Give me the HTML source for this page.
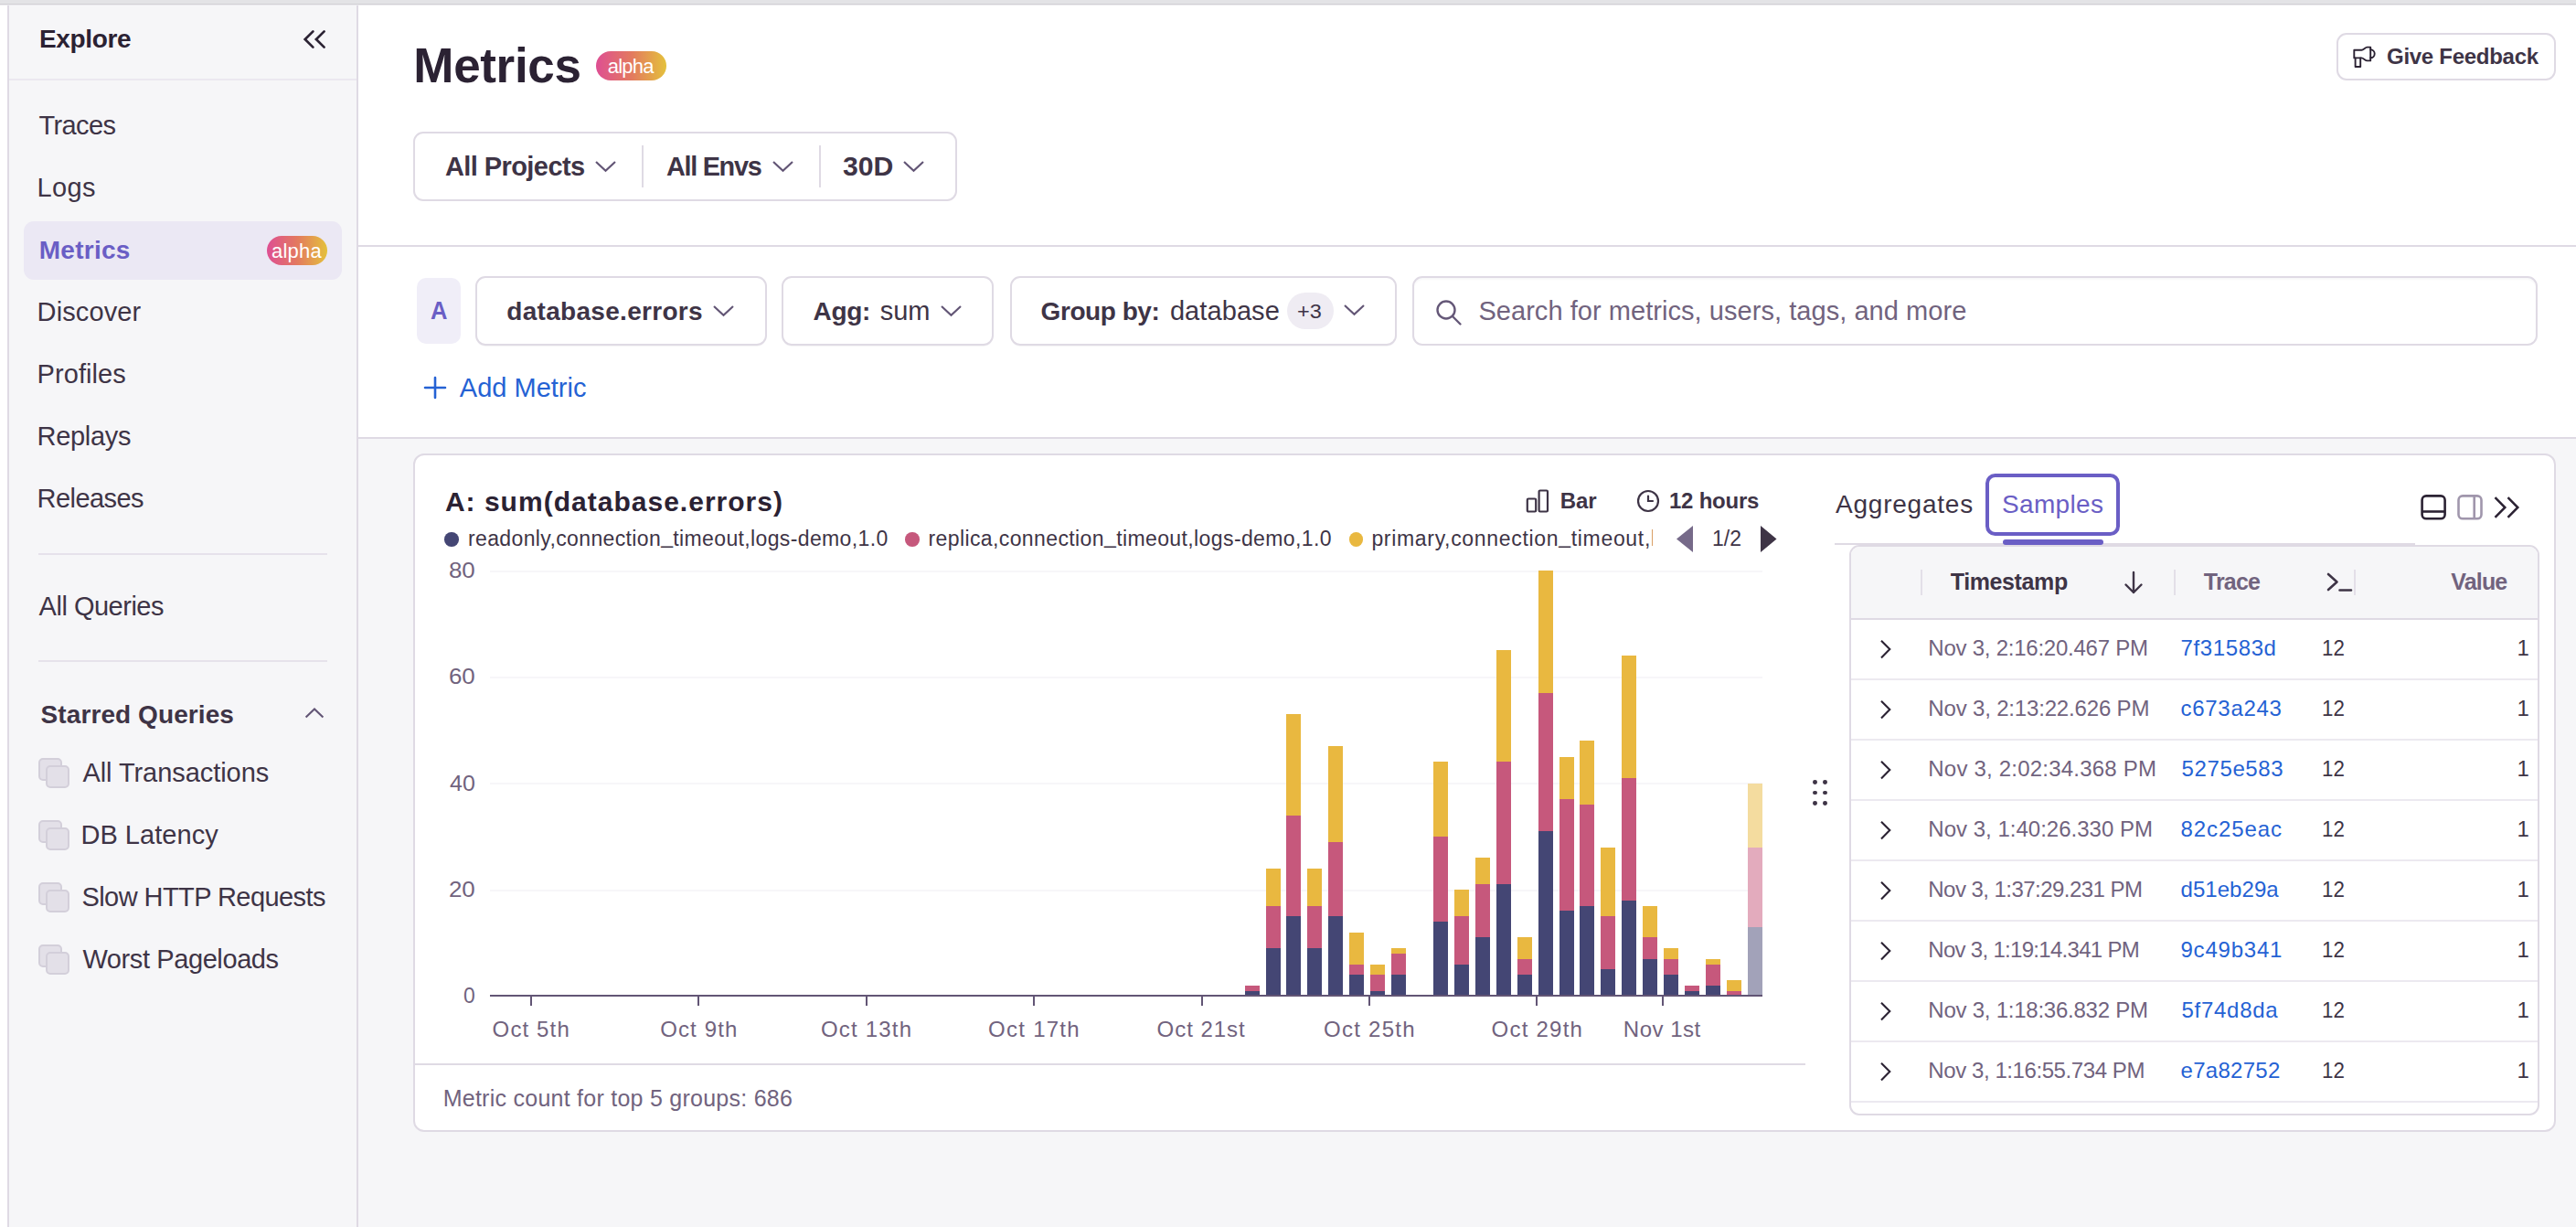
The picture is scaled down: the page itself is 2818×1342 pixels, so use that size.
<!DOCTYPE html>
<html><head><meta charset="utf-8"><title>Metrics</title>
<style>
html,body{margin:0;padding:0;}
body{width:2818px;height:1342px;position:relative;overflow:hidden;background:#fff;font-family:"Liberation Sans", sans-serif;}
.t{position:absolute;white-space:nowrap;}
</style></head><body>
<div style="position:absolute;left:0.00px;top:0.00px;width:2818.00px;height:4.00px;background:#e3e3e6"></div>
<div style="position:absolute;left:0.00px;top:4.00px;width:2818.00px;height:1.00px;background:#d2d0d5"></div>
<div style="position:absolute;left:0.00px;top:5.00px;width:2818.00px;height:1.00px;background:#ebeaee"></div>
<div style="position:absolute;left:8.00px;top:6.00px;width:384.00px;height:1336.00px;background:#f6f6f8"></div>
<div style="position:absolute;left:8.00px;top:6.00px;width:2.00px;height:1336.00px;background:#dfdae4"></div>
<div style="position:absolute;left:390.00px;top:6.00px;width:2.00px;height:1336.00px;background:#dfdae4"></div>
<div style="position:absolute;left:10.00px;top:86.00px;width:380.00px;height:2.00px;background:#ebe8f0"></div>
<div class="t" style="left:43.00px;top:29.00px;font-size:28px;line-height:28px;font-weight:700;color:#2b2233;letter-spacing:-0.355px;">Explore</div>
<svg style="position:absolute;left:330.00px;top:31.00px;overflow:visible" width="28.00" height="24.00" viewBox="0 0 28.00 24.00"><path d="M12.4 3.4 L3.7 12 L12.4 20.6 M24.6 3.4 L15.9 12 L24.6 20.6" fill="none" stroke="#2b2233" stroke-width="2.7" stroke-linecap="round" stroke-linejoin="miter"/></svg>
<div style="position:absolute;left:26.00px;top:242.00px;width:348.00px;height:64.00px;background:#ebe8f4;border-radius:11px"></div>
<div class="t" style="left:42.60px;top:123.00px;font-size:29px;line-height:29px;font-weight:400;color:#3e3446;letter-spacing:-0.650px;">Traces</div>
<div class="t" style="left:40.60px;top:191.00px;font-size:29px;line-height:29px;font-weight:400;color:#3e3446;letter-spacing:0.305px;">Logs</div>
<div class="t" style="left:42.75px;top:260.00px;font-size:28px;line-height:28px;font-weight:700;color:#6a5ec5;letter-spacing:0.264px;">Metrics</div>
<div class="t" style="left:40.60px;top:327.00px;font-size:29px;line-height:29px;font-weight:400;color:#3e3446;letter-spacing:0.108px;">Discover</div>
<div class="t" style="left:40.60px;top:395.00px;font-size:29px;line-height:29px;font-weight:400;color:#3e3446;letter-spacing:0.071px;">Profiles</div>
<div class="t" style="left:40.60px;top:463.00px;font-size:29px;line-height:29px;font-weight:400;color:#3e3446;letter-spacing:-0.328px;">Replays</div>
<div class="t" style="left:40.60px;top:531.00px;font-size:29px;line-height:29px;font-weight:400;color:#3e3446;letter-spacing:-0.571px;">Releases</div>
<div style="position:absolute;left:292px;top:258px;width:66px;height:32px;border-radius:16.0px;background:linear-gradient(90deg,#de4f93 0%,#e3795f 50%,#e4c13c 100%)"></div>
<div class="t" style="left:297.00px;top:264.00px;font-size:22px;line-height:22px;font-weight:400;color:#fff;letter-spacing:0.227px;">alpha</div>
<div style="position:absolute;left:42.00px;top:605.00px;width:316.00px;height:2.00px;background:#e6e2eb"></div>
<div class="t" style="left:42.60px;top:649.00px;font-size:29px;line-height:29px;font-weight:400;color:#3e3446;letter-spacing:-0.493px;">All Queries</div>
<div style="position:absolute;left:42.00px;top:722.00px;width:316.00px;height:2.00px;background:#e6e2eb"></div>
<div class="t" style="left:44.60px;top:768.00px;font-size:28px;line-height:28px;font-weight:700;color:#3e3446;letter-spacing:0.084px;">Starred Queries</div>
<svg style="position:absolute;left:332.00px;top:772.00px;overflow:visible" width="25.00" height="16.00" viewBox="0 0 25.00 16.00"><path d="M2.6 12.4 L12 3.4 L21.4 12.4" fill="none" stroke="#625575" stroke-width="2.1" stroke-linecap="butt" stroke-linejoin="miter"/></svg>
<div style="position:absolute;left:42.00px;top:828.50px;width:26.00px;height:25.00px;background:#e3e0e8;border:2px solid #d3cfda;border-radius:5px;box-sizing:border-box"></div>
<div style="position:absolute;left:50.00px;top:837.00px;width:26.00px;height:24.50px;background:#e3e0e8;border:2px solid #d3cfda;border-radius:5px;box-sizing:border-box"></div>
<div class="t" style="left:90.40px;top:831.00px;font-size:29px;line-height:29px;font-weight:400;color:#3e3446;letter-spacing:-0.055px;">All Transactions</div>
<div style="position:absolute;left:42.00px;top:896.50px;width:26.00px;height:25.00px;background:#e3e0e8;border:2px solid #d3cfda;border-radius:5px;box-sizing:border-box"></div>
<div style="position:absolute;left:50.00px;top:905.00px;width:26.00px;height:24.50px;background:#e3e0e8;border:2px solid #d3cfda;border-radius:5px;box-sizing:border-box"></div>
<div class="t" style="left:88.40px;top:899.00px;font-size:29px;line-height:29px;font-weight:400;color:#3e3446;letter-spacing:0.043px;">DB Latency</div>
<div style="position:absolute;left:42.00px;top:964.50px;width:26.00px;height:25.00px;background:#e3e0e8;border:2px solid #d3cfda;border-radius:5px;box-sizing:border-box"></div>
<div style="position:absolute;left:50.00px;top:973.00px;width:26.00px;height:24.50px;background:#e3e0e8;border:2px solid #d3cfda;border-radius:5px;box-sizing:border-box"></div>
<div class="t" style="left:89.40px;top:967.00px;font-size:29px;line-height:29px;font-weight:400;color:#3e3446;letter-spacing:-0.559px;">Slow HTTP Requests</div>
<div style="position:absolute;left:42.00px;top:1032.50px;width:26.00px;height:25.00px;background:#e3e0e8;border:2px solid #d3cfda;border-radius:5px;box-sizing:border-box"></div>
<div style="position:absolute;left:50.00px;top:1041.00px;width:26.00px;height:24.50px;background:#e3e0e8;border:2px solid #d3cfda;border-radius:5px;box-sizing:border-box"></div>
<div class="t" style="left:90.40px;top:1035.00px;font-size:29px;line-height:29px;font-weight:400;color:#3e3446;letter-spacing:-0.400px;">Worst Pageloads</div>
<div class="t" style="left:452.30px;top:45.00px;font-size:53px;line-height:53px;font-weight:700;color:#2b2233;letter-spacing:-0.317px;">Metrics</div>
<div style="position:absolute;left:652px;top:56px;width:77px;height:32px;border-radius:16.0px;background:linear-gradient(90deg,#de4f93 0%,#e3795f 50%,#e4c13c 100%)"></div>
<div class="t" style="left:664.70px;top:62.00px;font-size:22px;line-height:22px;font-weight:400;color:#fff;letter-spacing:-0.773px;">alpha</div>
<div style="position:absolute;left:452.00px;top:144.00px;width:595.00px;height:76.00px;border:2px solid #dfdae4;border-radius:11px;box-sizing:border-box"></div>
<div style="position:absolute;left:702.00px;top:159.00px;width:2.00px;height:46.00px;background:#dfdae4"></div>
<div style="position:absolute;left:896.00px;top:159.00px;width:2.00px;height:46.00px;background:#dfdae4"></div>
<div class="t" style="left:487.00px;top:168.00px;font-size:29px;line-height:29px;font-weight:700;color:#3e3446;letter-spacing:-0.584px;">All Projects</div>
<svg style="position:absolute;left:648.50px;top:173.60px;overflow:visible" width="27.00" height="15.70" viewBox="0 0 27.00 15.70"><path d="M3 3 L13.50 12.70 L24.00 3" fill="none" stroke="#625575" stroke-width="2.2" stroke-linecap="butt" stroke-linejoin="miter"/></svg>
<div class="t" style="left:729.00px;top:168.00px;font-size:29px;line-height:29px;font-weight:700;color:#3e3446;letter-spacing:-1.300px;transform:scaleX(0.9942);transform-origin:-0.00px 0;">All Envs</div>
<svg style="position:absolute;left:842.50px;top:173.60px;overflow:visible" width="27.00" height="15.70" viewBox="0 0 27.00 15.70"><path d="M3 3 L13.50 12.70 L24.00 3" fill="none" stroke="#625575" stroke-width="2.2" stroke-linecap="butt" stroke-linejoin="miter"/></svg>
<div class="t" style="left:922.00px;top:168.00px;font-size:29px;line-height:29px;font-weight:700;color:#3e3446;transform:scaleX(1.0410);transform-origin:-0.00px 0;">30D</div>
<svg style="position:absolute;left:986.00px;top:173.60px;overflow:visible" width="27.00" height="15.70" viewBox="0 0 27.00 15.70"><path d="M3 3 L13.50 12.70 L24.00 3" fill="none" stroke="#625575" stroke-width="2.2" stroke-linecap="butt" stroke-linejoin="miter"/></svg>
<div style="position:absolute;left:392.00px;top:268.00px;width:2426.00px;height:2.00px;background:#dfdae4"></div>
<div style="position:absolute;left:2556.00px;top:36.00px;width:240.00px;height:52.00px;border:2px solid #dfdae4;border-radius:11px;box-sizing:border-box"></div>
<svg style="position:absolute;left:2566.00px;top:44.00px;overflow:visible" width="40.00" height="36.00" viewBox="0 0 40.00 36.00"><g fill="none" stroke="#2b2233" stroke-width="1.9" stroke-linejoin="round" stroke-linecap="round"><path d="M9.3 10.8 H17.5 C19.5 10.8 21.5 7.6 23.5 7.6 H27.2 V22.4 H23.5 C21.5 22.4 19.5 19.4 17.5 19.4 H9.3 Z"/><path d="M27.2 10.3 A4.5 4.5 0 0 1 27.2 19.3"/><path d="M10.6 19.4 V29 H16.2 V19.4"/></g></svg>
<div class="t" style="left:2611.00px;top:50.00px;font-size:24px;line-height:24px;font-weight:700;color:#3e3446;letter-spacing:-0.281px;">Give Feedback</div>
<div style="position:absolute;left:456.00px;top:304.00px;width:48.00px;height:72.00px;background:#f0eef8;border-radius:10px"></div>
<div class="t" style="left:470.70px;top:327.00px;font-size:27px;line-height:27px;font-weight:700;color:#6a5ec5;transform:scaleX(0.9474);transform-origin:-0.00px 0;">A</div>
<div style="position:absolute;left:520.00px;top:302.00px;width:319.00px;height:76.00px;border:2px solid #dfdae4;border-radius:11px;box-sizing:border-box;box-shadow:0 2px 1px -1px rgba(43,34,51,0.05)"></div>
<div class="t" style="left:554.30px;top:327.00px;font-size:28px;line-height:28px;font-weight:700;color:#3e3446;letter-spacing:0.297px;">database.errors</div>
<svg style="position:absolute;left:777.50px;top:331.60px;overflow:visible" width="27.00" height="15.70" viewBox="0 0 27.00 15.70"><path d="M3 3 L13.50 12.70 L24.00 3" fill="none" stroke="#625575" stroke-width="2.2" stroke-linecap="butt" stroke-linejoin="miter"/></svg>
<div style="position:absolute;left:855.00px;top:302.00px;width:232.00px;height:76.00px;border:2px solid #dfdae4;border-radius:11px;box-sizing:border-box;box-shadow:0 2px 1px -1px rgba(43,34,51,0.05)"></div>
<div class="t" style="left:889.60px;top:327.00px;font-size:28px;line-height:28px;font-weight:700;color:#3e3446;letter-spacing:-0.376px;">Agg:</div>
<div class="t" style="left:962.70px;top:326.00px;font-size:29px;line-height:29px;font-weight:400;color:#3e3446;">sum</div>
<svg style="position:absolute;left:1026.50px;top:331.60px;overflow:visible" width="27.00" height="15.70" viewBox="0 0 27.00 15.70"><path d="M3 3 L13.50 12.70 L24.00 3" fill="none" stroke="#625575" stroke-width="2.2" stroke-linecap="butt" stroke-linejoin="miter"/></svg>
<div style="position:absolute;left:1105.00px;top:302.00px;width:423.00px;height:76.00px;border:2px solid #dfdae4;border-radius:11px;box-sizing:border-box;box-shadow:0 2px 1px -1px rgba(43,34,51,0.05)"></div>
<div class="t" style="left:1138.60px;top:327.00px;font-size:28px;line-height:28px;font-weight:700;color:#3e3446;letter-spacing:-0.443px;">Group by:</div>
<div class="t" style="left:1279.90px;top:326.00px;font-size:29px;line-height:29px;font-weight:400;color:#3e3446;letter-spacing:0.086px;">database</div>
<div style="position:absolute;left:1408.00px;top:320.00px;width:51.00px;height:40.00px;background:#efecf3;border-radius:20px"></div>
<div class="t" style="left:1419.40px;top:330.00px;font-size:22px;line-height:22px;font-weight:400;color:#3e3446;transform:scaleX(1.0693);transform-origin:1.00px 0;">+3</div>
<svg style="position:absolute;left:1467.80px;top:331.20px;overflow:visible" width="27.00" height="15.70" viewBox="0 0 27.00 15.70"><path d="M3 3 L13.50 12.70 L24.00 3" fill="none" stroke="#625575" stroke-width="2.2" stroke-linecap="butt" stroke-linejoin="miter"/></svg>
<div style="position:absolute;left:1545.00px;top:302.00px;width:1231.00px;height:76.00px;border:2px solid #dfdae4;border-radius:11px;box-sizing:border-box;box-shadow:inset 0 2px 2px rgba(43,34,51,0.03)"></div>
<svg style="position:absolute;left:1570.00px;top:327.00px;overflow:visible" width="30.00" height="30.00" viewBox="0 0 30.00 30.00"><g fill="none" stroke="#655878" stroke-width="2.4" stroke-linecap="round"><circle cx="12" cy="12" r="9.5"/><path d="M19 19 L27.5 27.5"/></g></svg>
<div class="t" style="left:1617.40px;top:326.00px;font-size:29px;line-height:29px;font-weight:400;color:#71637e;letter-spacing:0.051px;">Search for metrics, users, tags, and more</div>
<svg style="position:absolute;left:463.00px;top:411.00px;overflow:visible" width="26.00" height="26.00" viewBox="0 0 26.00 26.00"><path d="M13 2 V24 M2 13 H24" fill="none" stroke="#2562d4" stroke-width="2.6" stroke-linecap="round"/></svg>
<div class="t" style="left:502.80px;top:410.00px;font-size:29px;line-height:29px;font-weight:400;color:#2562d4;letter-spacing:0.011px;">Add Metric</div>
<div style="position:absolute;left:392.00px;top:478.00px;width:2426.00px;height:2.00px;background:#dfdae4"></div>
<div style="position:absolute;left:392.00px;top:480.00px;width:2426.00px;height:862.00px;background:#f6f6f8"></div>
<div style="position:absolute;left:452.00px;top:496.00px;width:2344.00px;height:742.00px;background:#fff;border:2px solid #dfdae4;border-radius:12px;box-sizing:border-box"></div>
<div class="t" style="left:486.90px;top:534.00px;font-size:30px;line-height:30px;font-weight:700;color:#2b2233;letter-spacing:1.014px;">A: sum(database.errors)</div>
<div style="position:absolute;left:486px;top:582px;width:15.5px;height:15.5px;border-radius:50%;background:#444674"></div>
<div style="position:absolute;left:990.3px;top:582px;width:15.5px;height:15.5px;border-radius:50%;background:#c6587c"></div>
<div style="position:absolute;left:1475.5px;top:582px;width:15.5px;height:15.5px;border-radius:50%;background:#e9b840"></div>
<div class="t" style="left:512.00px;top:578.00px;font-size:23px;line-height:23px;font-weight:400;color:#3e3446;letter-spacing:0.367px;">readonly,connection<span style="position:relative;top:-3px">_</span>timeout,logs-demo,1.0</div>
<div class="t" style="left:1015.50px;top:578.00px;font-size:23px;line-height:23px;font-weight:400;color:#3e3446;letter-spacing:0.393px;">replica,connection<span style="position:relative;top:-3px">_</span>timeout,logs-demo,1.0</div>
<div style="position:absolute;left:1501.4px;top:568.00px;width:307.10px;height:43px;overflow:hidden"><div class="t" style="left:-1.00px;top:10px;font-size:23px;line-height:23px;font-weight:400;color:#3e3446;letter-spacing:0.680px;">primary,connection<span style="position:relative;top:-3px">_</span>timeout,logs-demo,1.0</div></div>
<svg style="position:absolute;left:1833.50px;top:574.50px;overflow:visible" width="18.00" height="29.00" viewBox="0 0 18.00 29.00"><path d="M18 0 V29 L0 14.5 Z" fill="#766a89"/></svg>
<div class="t" style="left:1873.00px;top:578.00px;font-size:23px;line-height:23px;font-weight:400;color:#3e3446;">1/2</div>
<svg style="position:absolute;left:1926.00px;top:574.50px;overflow:visible" width="17.50" height="29.00" viewBox="0 0 17.50 29.00"><path d="M0 0 V29 L17.5 14.5 Z" fill="#3e3446"/></svg>
<svg style="position:absolute;left:1669.00px;top:535.00px;overflow:visible" width="26.00" height="26.00" viewBox="0 0 26.00 26.00"><g fill="none" stroke="#3e3446" stroke-width="2.2" stroke-linejoin="round"><rect x="1.8" y="10.5" width="9.4" height="14" rx="1.2"/><rect x="14.6" y="1.5" width="9.4" height="23" rx="1.2"/></g></svg>
<div class="t" style="left:1706.70px;top:536.00px;font-size:24px;line-height:24px;font-weight:700;color:#3e3446;">Bar</div>
<svg style="position:absolute;left:1790.00px;top:535.00px;overflow:visible" width="26.00" height="26.00" viewBox="0 0 26.00 26.00"><g fill="none" stroke="#3e3446" stroke-width="2.2" stroke-linecap="round"><circle cx="13" cy="13" r="11"/><path d="M13 7.5 V13 H18"/></g></svg>
<div class="t" style="left:1826.00px;top:536.00px;font-size:24px;line-height:24px;font-weight:700;color:#3e3446;letter-spacing:-0.226px;">12 hours</div>
<div style="position:absolute;left:536.00px;top:972.62px;width:1392.00px;height:2.00px;background:#f7f6f9"></div>
<div style="position:absolute;left:536.00px;top:856.25px;width:1392.00px;height:2.00px;background:#f7f6f9"></div>
<div style="position:absolute;left:536.00px;top:739.88px;width:1392.00px;height:2.00px;background:#f7f6f9"></div>
<div style="position:absolute;left:536.00px;top:623.50px;width:1392.00px;height:2.00px;background:#f7f6f9"></div>
<div class="t" style="left:506.90px;top:1077.00px;font-size:24px;line-height:24px;font-weight:400;color:#71637e;transform:scaleX(0.9538);transform-origin:-0.00px 0;">0</div>
<div class="t" style="left:490.90px;top:961.00px;font-size:24px;line-height:24px;font-weight:400;color:#71637e;transform:scaleX(1.0810);transform-origin:1.00px 0;">20</div>
<div class="t" style="left:491.90px;top:845.00px;font-size:24px;line-height:24px;font-weight:400;color:#71637e;transform:scaleX(1.0399);transform-origin:-0.00px 0;">40</div>
<div class="t" style="left:490.90px;top:728.00px;font-size:24px;line-height:24px;font-weight:400;color:#71637e;transform:scaleX(1.0810);transform-origin:1.00px 0;">60</div>
<div class="t" style="left:490.90px;top:612.00px;font-size:24px;line-height:24px;font-weight:400;color:#71637e;transform:scaleX(1.0810);transform-origin:1.00px 0;">80</div>
<div style="position:absolute;left:579.78px;top:1089.00px;width:2.00px;height:11.00px;background:#625575"></div>
<div class="t" style="left:538.60px;top:1114.00px;font-size:24px;line-height:24px;font-weight:400;color:#71637e;letter-spacing:1.130px;">Oct 5th</div>
<div style="position:absolute;left:763.22px;top:1089.00px;width:2.00px;height:11.00px;background:#625575"></div>
<div class="t" style="left:722.20px;top:1114.00px;font-size:24px;line-height:24px;font-weight:400;color:#71637e;letter-spacing:1.130px;">Oct 9th</div>
<div style="position:absolute;left:946.66px;top:1089.00px;width:2.00px;height:11.00px;background:#625575"></div>
<div class="t" style="left:898.00px;top:1114.00px;font-size:24px;line-height:24px;font-weight:400;color:#71637e;letter-spacing:1.190px;">Oct 13th</div>
<div style="position:absolute;left:1130.10px;top:1089.00px;width:2.00px;height:11.00px;background:#625575"></div>
<div class="t" style="left:1081.10px;top:1114.00px;font-size:24px;line-height:24px;font-weight:400;color:#71637e;letter-spacing:1.262px;">Oct 17th</div>
<div style="position:absolute;left:1313.54px;top:1089.00px;width:2.00px;height:11.00px;background:#625575"></div>
<div class="t" style="left:1265.60px;top:1114.00px;font-size:24px;line-height:24px;font-weight:400;color:#71637e;letter-spacing:0.957px;">Oct 21st</div>
<div style="position:absolute;left:1496.98px;top:1089.00px;width:2.00px;height:11.00px;background:#625575"></div>
<div class="t" style="left:1448.00px;top:1114.00px;font-size:24px;line-height:24px;font-weight:400;color:#71637e;letter-spacing:1.262px;">Oct 25th</div>
<div style="position:absolute;left:1680.42px;top:1089.00px;width:2.00px;height:11.00px;background:#625575"></div>
<div class="t" style="left:1631.50px;top:1114.00px;font-size:24px;line-height:24px;font-weight:400;color:#71637e;letter-spacing:1.248px;">Oct 29th</div>
<div style="position:absolute;left:1818.00px;top:1089.00px;width:2.00px;height:11.00px;background:#625575"></div>
<div class="t" style="left:1775.80px;top:1114.00px;font-size:24px;line-height:24px;font-weight:400;color:#71637e;letter-spacing:0.517px;">Nov 1st</div>
<div style="position:absolute;left:1361.60px;top:1083.68px;width:16.00px;height:5.82px;background:#444674"></div>
<div style="position:absolute;left:1361.60px;top:1077.86px;width:16.00px;height:5.82px;background:#c6587c"></div>
<div style="position:absolute;left:1384.53px;top:1037.13px;width:16.00px;height:52.37px;background:#444674"></div>
<div style="position:absolute;left:1384.53px;top:990.58px;width:16.00px;height:46.55px;background:#c6587c"></div>
<div style="position:absolute;left:1384.53px;top:949.85px;width:16.00px;height:40.73px;background:#e9b840"></div>
<div style="position:absolute;left:1407.46px;top:1002.22px;width:16.00px;height:87.28px;background:#444674"></div>
<div style="position:absolute;left:1407.46px;top:891.66px;width:16.00px;height:110.56px;background:#c6587c"></div>
<div style="position:absolute;left:1407.46px;top:781.11px;width:16.00px;height:110.56px;background:#e9b840"></div>
<div style="position:absolute;left:1430.39px;top:1037.13px;width:16.00px;height:52.37px;background:#444674"></div>
<div style="position:absolute;left:1430.39px;top:990.58px;width:16.00px;height:46.55px;background:#c6587c"></div>
<div style="position:absolute;left:1430.39px;top:949.85px;width:16.00px;height:40.73px;background:#e9b840"></div>
<div style="position:absolute;left:1453.32px;top:1002.22px;width:16.00px;height:87.28px;background:#444674"></div>
<div style="position:absolute;left:1453.32px;top:920.76px;width:16.00px;height:81.46px;background:#c6587c"></div>
<div style="position:absolute;left:1453.32px;top:816.02px;width:16.00px;height:104.74px;background:#e9b840"></div>
<div style="position:absolute;left:1476.25px;top:1066.22px;width:16.00px;height:23.28px;background:#444674"></div>
<div style="position:absolute;left:1476.25px;top:1054.59px;width:16.00px;height:11.64px;background:#c6587c"></div>
<div style="position:absolute;left:1476.25px;top:1019.67px;width:16.00px;height:34.91px;background:#e9b840"></div>
<div style="position:absolute;left:1499.18px;top:1083.68px;width:16.00px;height:5.82px;background:#444674"></div>
<div style="position:absolute;left:1499.18px;top:1066.22px;width:16.00px;height:17.46px;background:#c6587c"></div>
<div style="position:absolute;left:1499.18px;top:1054.59px;width:16.00px;height:11.64px;background:#e9b840"></div>
<div style="position:absolute;left:1522.11px;top:1066.22px;width:16.00px;height:23.28px;background:#444674"></div>
<div style="position:absolute;left:1522.11px;top:1042.95px;width:16.00px;height:23.27px;background:#c6587c"></div>
<div style="position:absolute;left:1522.11px;top:1037.13px;width:16.00px;height:5.82px;background:#e9b840"></div>
<div style="position:absolute;left:1567.97px;top:1008.04px;width:16.00px;height:81.46px;background:#444674"></div>
<div style="position:absolute;left:1567.97px;top:914.94px;width:16.00px;height:93.10px;background:#c6587c"></div>
<div style="position:absolute;left:1567.97px;top:833.48px;width:16.00px;height:81.46px;background:#e9b840"></div>
<div style="position:absolute;left:1590.90px;top:1054.59px;width:16.00px;height:34.91px;background:#444674"></div>
<div style="position:absolute;left:1590.90px;top:1002.22px;width:16.00px;height:52.37px;background:#c6587c"></div>
<div style="position:absolute;left:1590.90px;top:973.12px;width:16.00px;height:29.09px;background:#e9b840"></div>
<div style="position:absolute;left:1613.83px;top:1025.49px;width:16.00px;height:64.01px;background:#444674"></div>
<div style="position:absolute;left:1613.83px;top:967.31px;width:16.00px;height:58.19px;background:#c6587c"></div>
<div style="position:absolute;left:1613.83px;top:938.21px;width:16.00px;height:29.09px;background:#e9b840"></div>
<div style="position:absolute;left:1636.76px;top:967.31px;width:16.00px;height:122.19px;background:#444674"></div>
<div style="position:absolute;left:1636.76px;top:833.48px;width:16.00px;height:133.83px;background:#c6587c"></div>
<div style="position:absolute;left:1636.76px;top:711.28px;width:16.00px;height:122.19px;background:#e9b840"></div>
<div style="position:absolute;left:1659.69px;top:1066.22px;width:16.00px;height:23.28px;background:#444674"></div>
<div style="position:absolute;left:1659.69px;top:1048.77px;width:16.00px;height:17.46px;background:#c6587c"></div>
<div style="position:absolute;left:1659.69px;top:1025.49px;width:16.00px;height:23.27px;background:#e9b840"></div>
<div style="position:absolute;left:1682.62px;top:909.12px;width:16.00px;height:180.38px;background:#444674"></div>
<div style="position:absolute;left:1682.62px;top:757.83px;width:16.00px;height:151.29px;background:#c6587c"></div>
<div style="position:absolute;left:1682.62px;top:624.00px;width:16.00px;height:133.83px;background:#e9b840"></div>
<div style="position:absolute;left:1705.55px;top:996.40px;width:16.00px;height:93.10px;background:#444674"></div>
<div style="position:absolute;left:1705.55px;top:874.21px;width:16.00px;height:122.19px;background:#c6587c"></div>
<div style="position:absolute;left:1705.55px;top:827.66px;width:16.00px;height:46.55px;background:#e9b840"></div>
<div style="position:absolute;left:1728.48px;top:990.58px;width:16.00px;height:98.92px;background:#444674"></div>
<div style="position:absolute;left:1728.48px;top:880.02px;width:16.00px;height:110.56px;background:#c6587c"></div>
<div style="position:absolute;left:1728.48px;top:810.20px;width:16.00px;height:69.82px;background:#e9b840"></div>
<div style="position:absolute;left:1751.41px;top:1060.41px;width:16.00px;height:29.09px;background:#444674"></div>
<div style="position:absolute;left:1751.41px;top:1002.22px;width:16.00px;height:58.19px;background:#c6587c"></div>
<div style="position:absolute;left:1751.41px;top:926.58px;width:16.00px;height:75.64px;background:#e9b840"></div>
<div style="position:absolute;left:1774.34px;top:984.76px;width:16.00px;height:104.74px;background:#444674"></div>
<div style="position:absolute;left:1774.34px;top:850.93px;width:16.00px;height:133.83px;background:#c6587c"></div>
<div style="position:absolute;left:1774.34px;top:717.10px;width:16.00px;height:133.83px;background:#e9b840"></div>
<div style="position:absolute;left:1797.27px;top:1048.77px;width:16.00px;height:40.73px;background:#444674"></div>
<div style="position:absolute;left:1797.27px;top:1025.49px;width:16.00px;height:23.27px;background:#c6587c"></div>
<div style="position:absolute;left:1797.27px;top:990.58px;width:16.00px;height:34.91px;background:#e9b840"></div>
<div style="position:absolute;left:1820.20px;top:1066.22px;width:16.00px;height:23.28px;background:#444674"></div>
<div style="position:absolute;left:1820.20px;top:1048.77px;width:16.00px;height:17.46px;background:#c6587c"></div>
<div style="position:absolute;left:1820.20px;top:1037.13px;width:16.00px;height:11.64px;background:#e9b840"></div>
<div style="position:absolute;left:1843.13px;top:1083.68px;width:16.00px;height:5.82px;background:#444674"></div>
<div style="position:absolute;left:1843.13px;top:1077.86px;width:16.00px;height:5.82px;background:#c6587c"></div>
<div style="position:absolute;left:1866.06px;top:1077.86px;width:16.00px;height:11.64px;background:#444674"></div>
<div style="position:absolute;left:1866.06px;top:1054.59px;width:16.00px;height:23.27px;background:#c6587c"></div>
<div style="position:absolute;left:1866.06px;top:1048.77px;width:16.00px;height:5.82px;background:#e9b840"></div>
<div style="position:absolute;left:1888.99px;top:1083.68px;width:16.00px;height:5.82px;background:#c6587c"></div>
<div style="position:absolute;left:1888.99px;top:1072.04px;width:16.00px;height:11.64px;background:#e9b840"></div>
<div style="position:absolute;left:1911.92px;top:1013.86px;width:16.00px;height:75.64px;background:#a2a2b9"></div>
<div style="position:absolute;left:1911.92px;top:926.58px;width:16.00px;height:87.28px;background:#e3abbd"></div>
<div style="position:absolute;left:1911.92px;top:856.75px;width:16.00px;height:69.83px;background:#f4dc9f"></div>
<div style="position:absolute;left:535.70px;top:1088.00px;width:1392.30px;height:2.00px;background:#625575"></div>
<div style="position:absolute;left:453.50px;top:1163.00px;width:1521.50px;height:2.00px;background:#dfdae4"></div>
<div class="t" style="left:484.70px;top:1189.00px;font-size:25px;line-height:25px;font-weight:400;color:#71637e;letter-spacing:0.254px;">Metric count for top 5 groups: 686</div>
<div style="position:absolute;left:1982.80px;top:852.80px;width:4.8px;height:4.8px;border-radius:50%;background:#3e3446"></div>
<div style="position:absolute;left:1982.80px;top:864.50px;width:4.8px;height:4.8px;border-radius:50%;background:#3e3446"></div>
<div style="position:absolute;left:1982.80px;top:876.20px;width:4.8px;height:4.8px;border-radius:50%;background:#3e3446"></div>
<div style="position:absolute;left:1994.30px;top:852.80px;width:4.8px;height:4.8px;border-radius:50%;background:#3e3446"></div>
<div style="position:absolute;left:1994.30px;top:864.50px;width:4.8px;height:4.8px;border-radius:50%;background:#3e3446"></div>
<div style="position:absolute;left:1994.30px;top:876.20px;width:4.8px;height:4.8px;border-radius:50%;background:#3e3446"></div>
<div class="t" style="left:2008.00px;top:538.00px;font-size:28px;line-height:28px;font-weight:400;color:#3e3446;letter-spacing:0.776px;">Aggregates</div>
<div style="position:absolute;left:2172.00px;top:517.70px;width:147.30px;height:68.30px;border:4px solid #6a5ec5;border-radius:10.5px;box-sizing:border-box"></div>
<div class="t" style="left:2190.00px;top:538.00px;font-size:28px;line-height:28px;font-weight:400;color:#6a5ec5;letter-spacing:0.344px;">Samples</div>
<div style="position:absolute;left:2007.00px;top:594.00px;width:635.00px;height:2.00px;background:#dfdae4"></div>
<div style="position:absolute;left:2191.00px;top:590.00px;width:110.00px;height:6.00px;background:#6a5ec5;border-radius:3px"></div>
<svg style="position:absolute;left:2647.00px;top:540.00px;overflow:visible" width="30.00" height="30.00" viewBox="0 0 30.00 30.00"><g fill="none" stroke="#2b2233" stroke-width="2.6"><rect x="2.6" y="2.4" width="25" height="24.9" rx="4.5"/><path d="M2.6 19.5 H27.6"/></g></svg>
<svg style="position:absolute;left:2687.00px;top:540.00px;overflow:visible" width="30.00" height="30.00" viewBox="0 0 30.00 30.00"><g fill="none" stroke="#a096ac" stroke-width="2.6"><rect x="2.5" y="2.4" width="25" height="24.9" rx="4.5"/><path d="M19.7 2.4 V27.3"/></g></svg>
<svg style="position:absolute;left:2727.00px;top:542.00px;overflow:visible" width="30.00" height="26.00" viewBox="0 0 30.00 26.00"><path d="M2.5 2.2 L13.3 13 L2.5 23.8 M16.5 2.2 L27.3 13 L16.5 23.8" fill="none" stroke="#2b2233" stroke-width="2.5" stroke-linecap="butt" stroke-linejoin="miter"/></svg>
<div style="position:absolute;left:2023px;top:596px;width:755px;height:624px;border:2px solid #dfdae4;border-radius:11px;box-sizing:border-box;overflow:hidden;background:#fff">
<div style="position:absolute;left:0;top:0;width:100%;height:78px;background:#f6f6f8;border-bottom:2px solid #dfdae4"></div>
<div style="position:absolute;left:0;top:144px;width:100%;height:2px;background:#ece9f0"></div>
<div style="position:absolute;left:0;top:210px;width:100%;height:2px;background:#ece9f0"></div>
<div style="position:absolute;left:0;top:276px;width:100%;height:2px;background:#ece9f0"></div>
<div style="position:absolute;left:0;top:342px;width:100%;height:2px;background:#ece9f0"></div>
<div style="position:absolute;left:0;top:408px;width:100%;height:2px;background:#ece9f0"></div>
<div style="position:absolute;left:0;top:474px;width:100%;height:2px;background:#ece9f0"></div>
<div style="position:absolute;left:0;top:540px;width:100%;height:2px;background:#ece9f0"></div>
<div style="position:absolute;left:0;top:606px;width:100%;height:2px;background:#ece9f0"></div>
</div>
<div style="position:absolute;left:2101.00px;top:623.00px;width:2.00px;height:28.00px;background:#e3dfe8"></div>
<div style="position:absolute;left:2378.00px;top:623.00px;width:2.00px;height:28.00px;background:#e3dfe8"></div>
<div style="position:absolute;left:2574.50px;top:623.00px;width:2.00px;height:28.00px;background:#e3dfe8"></div>
<div class="t" style="left:2133.80px;top:624.00px;font-size:25px;line-height:25px;font-weight:700;color:#3e3446;letter-spacing:-0.395px;">Timestamp</div>
<svg style="position:absolute;left:2323.00px;top:624.00px;overflow:visible" width="22.00" height="26.00" viewBox="0 0 22.00 26.00"><path d="M11 2 V24 M2.5 15.5 L11 24 L19.5 15.5" fill="none" stroke="#3e3446" stroke-width="2.4" stroke-linecap="round" stroke-linejoin="round"/></svg>
<div class="t" style="left:2410.80px;top:624.00px;font-size:25px;line-height:25px;font-weight:700;color:#71637e;letter-spacing:-0.807px;">Trace</div>
<svg style="position:absolute;left:2545.00px;top:626.00px;overflow:visible" width="30.00" height="22.00" viewBox="0 0 30.00 22.00"><path d="M2 2 L11.5 10.5 L2 19 M14.5 19.5 H27" fill="none" stroke="#3e3446" stroke-width="2.6" stroke-linecap="round" stroke-linejoin="round"/></svg>
<div class="t" style="left:2681.30px;top:624.00px;font-size:25px;line-height:25px;font-weight:700;color:#71637e;letter-spacing:-0.854px;">Value</div>
<svg style="position:absolute;left:2054.00px;top:698.00px;overflow:visible" width="18.00" height="24.00" viewBox="0 0 18.00 24.00"><path d="M4 2.8 L13.3 12.1 L4 21.4" fill="none" stroke="#2b2233" stroke-width="2.1" stroke-linecap="butt" stroke-linejoin="miter"/></svg>
<div class="t" style="left:2109.30px;top:697.00px;font-size:24px;line-height:24px;font-weight:400;color:#71637e;letter-spacing:-0.240px;">Nov 3, 2:16:20.467 PM</div>
<div class="t" style="left:2385.50px;top:697.00px;font-size:24px;line-height:24px;font-weight:400;color:#2562d4;letter-spacing:0.621px;">7f31583d</div>
<div class="t" style="left:2540.40px;top:697.00px;font-size:24px;line-height:24px;font-weight:400;color:#3e3446;transform:scaleX(0.9311);transform-origin:1.00px 0;">12</div>
<div class="t" style="left:2753.50px;top:697.00px;font-size:24px;line-height:24px;font-weight:400;color:#3e3446;">1</div>
<svg style="position:absolute;left:2054.00px;top:764.00px;overflow:visible" width="18.00" height="24.00" viewBox="0 0 18.00 24.00"><path d="M4 2.8 L13.3 12.1 L4 21.4" fill="none" stroke="#2b2233" stroke-width="2.1" stroke-linecap="butt" stroke-linejoin="miter"/></svg>
<div class="t" style="left:2109.30px;top:763.00px;font-size:24px;line-height:24px;font-weight:400;color:#71637e;letter-spacing:-0.170px;">Nov 3, 2:13:22.626 PM</div>
<div class="t" style="left:2385.50px;top:763.00px;font-size:24px;line-height:24px;font-weight:400;color:#2562d4;letter-spacing:0.716px;">c673a243</div>
<div class="t" style="left:2540.40px;top:763.00px;font-size:24px;line-height:24px;font-weight:400;color:#3e3446;transform:scaleX(0.9311);transform-origin:1.00px 0;">12</div>
<div class="t" style="left:2753.50px;top:763.00px;font-size:24px;line-height:24px;font-weight:400;color:#3e3446;">1</div>
<svg style="position:absolute;left:2054.00px;top:830.00px;overflow:visible" width="18.00" height="24.00" viewBox="0 0 18.00 24.00"><path d="M4 2.8 L13.3 12.1 L4 21.4" fill="none" stroke="#2b2233" stroke-width="2.1" stroke-linecap="butt" stroke-linejoin="miter"/></svg>
<div class="t" style="left:2109.30px;top:829.00px;font-size:24px;line-height:24px;font-weight:400;color:#71637e;letter-spacing:0.210px;">Nov 3, 2:02:34.368 PM</div>
<div class="t" style="left:2386.50px;top:829.00px;font-size:24px;line-height:24px;font-weight:400;color:#2562d4;letter-spacing:0.624px;">5275e583</div>
<div class="t" style="left:2540.40px;top:829.00px;font-size:24px;line-height:24px;font-weight:400;color:#3e3446;transform:scaleX(0.9311);transform-origin:1.00px 0;">12</div>
<div class="t" style="left:2753.50px;top:829.00px;font-size:24px;line-height:24px;font-weight:400;color:#3e3446;">1</div>
<svg style="position:absolute;left:2054.00px;top:896.00px;overflow:visible" width="18.00" height="24.00" viewBox="0 0 18.00 24.00"><path d="M4 2.8 L13.3 12.1 L4 21.4" fill="none" stroke="#2b2233" stroke-width="2.1" stroke-linecap="butt" stroke-linejoin="miter"/></svg>
<div class="t" style="left:2109.30px;top:895.00px;font-size:24px;line-height:24px;font-weight:400;color:#71637e;letter-spacing:0.010px;">Nov 3, 1:40:26.330 PM</div>
<div class="t" style="left:2385.50px;top:895.00px;font-size:24px;line-height:24px;font-weight:400;color:#2562d4;letter-spacing:0.916px;">82c25eac</div>
<div class="t" style="left:2540.40px;top:895.00px;font-size:24px;line-height:24px;font-weight:400;color:#3e3446;transform:scaleX(0.9311);transform-origin:1.00px 0;">12</div>
<div class="t" style="left:2753.50px;top:895.00px;font-size:24px;line-height:24px;font-weight:400;color:#3e3446;">1</div>
<svg style="position:absolute;left:2054.00px;top:962.00px;overflow:visible" width="18.00" height="24.00" viewBox="0 0 18.00 24.00"><path d="M4 2.8 L13.3 12.1 L4 21.4" fill="none" stroke="#2b2233" stroke-width="2.1" stroke-linecap="butt" stroke-linejoin="miter"/></svg>
<div class="t" style="left:2109.30px;top:961.00px;font-size:24px;line-height:24px;font-weight:400;color:#71637e;letter-spacing:-0.540px;">Nov 3, 1:37:29.231 PM</div>
<div class="t" style="left:2385.50px;top:961.00px;font-size:24px;line-height:24px;font-weight:400;color:#2562d4;letter-spacing:0.052px;">d51eb29a</div>
<div class="t" style="left:2540.40px;top:961.00px;font-size:24px;line-height:24px;font-weight:400;color:#3e3446;transform:scaleX(0.9311);transform-origin:1.00px 0;">12</div>
<div class="t" style="left:2753.50px;top:961.00px;font-size:24px;line-height:24px;font-weight:400;color:#3e3446;">1</div>
<svg style="position:absolute;left:2054.00px;top:1028.00px;overflow:visible" width="18.00" height="24.00" viewBox="0 0 18.00 24.00"><path d="M4 2.8 L13.3 12.1 L4 21.4" fill="none" stroke="#2b2233" stroke-width="2.1" stroke-linecap="butt" stroke-linejoin="miter"/></svg>
<div class="t" style="left:2109.30px;top:1027.00px;font-size:24px;line-height:24px;font-weight:400;color:#71637e;letter-spacing:-0.705px;">Nov 3, 1:19:14.341 PM</div>
<div class="t" style="left:2385.50px;top:1027.00px;font-size:24px;line-height:24px;font-weight:400;color:#2562d4;letter-spacing:0.773px;">9c49b341</div>
<div class="t" style="left:2540.40px;top:1027.00px;font-size:24px;line-height:24px;font-weight:400;color:#3e3446;transform:scaleX(0.9311);transform-origin:1.00px 0;">12</div>
<div class="t" style="left:2753.50px;top:1027.00px;font-size:24px;line-height:24px;font-weight:400;color:#3e3446;">1</div>
<svg style="position:absolute;left:2054.00px;top:1094.00px;overflow:visible" width="18.00" height="24.00" viewBox="0 0 18.00 24.00"><path d="M4 2.8 L13.3 12.1 L4 21.4" fill="none" stroke="#2b2233" stroke-width="2.1" stroke-linecap="butt" stroke-linejoin="miter"/></svg>
<div class="t" style="left:2109.30px;top:1093.00px;font-size:24px;line-height:24px;font-weight:400;color:#71637e;letter-spacing:-0.240px;">Nov 3, 1:18:36.832 PM</div>
<div class="t" style="left:2386.50px;top:1093.00px;font-size:24px;line-height:24px;font-weight:400;color:#2562d4;letter-spacing:0.721px;">5f74d8da</div>
<div class="t" style="left:2540.40px;top:1093.00px;font-size:24px;line-height:24px;font-weight:400;color:#3e3446;transform:scaleX(0.9311);transform-origin:1.00px 0;">12</div>
<div class="t" style="left:2753.50px;top:1093.00px;font-size:24px;line-height:24px;font-weight:400;color:#3e3446;">1</div>
<svg style="position:absolute;left:2054.00px;top:1160.00px;overflow:visible" width="18.00" height="24.00" viewBox="0 0 18.00 24.00"><path d="M4 2.8 L13.3 12.1 L4 21.4" fill="none" stroke="#2b2233" stroke-width="2.1" stroke-linecap="butt" stroke-linejoin="miter"/></svg>
<div class="t" style="left:2109.30px;top:1159.00px;font-size:24px;line-height:24px;font-weight:400;color:#71637e;letter-spacing:-0.420px;">Nov 3, 1:16:55.734 PM</div>
<div class="t" style="left:2385.50px;top:1159.00px;font-size:24px;line-height:24px;font-weight:400;color:#2562d4;letter-spacing:0.295px;">e7a82752</div>
<div class="t" style="left:2540.40px;top:1159.00px;font-size:24px;line-height:24px;font-weight:400;color:#3e3446;transform:scaleX(0.9311);transform-origin:1.00px 0;">12</div>
<div class="t" style="left:2753.50px;top:1159.00px;font-size:24px;line-height:24px;font-weight:400;color:#3e3446;">1</div>
</body></html>
